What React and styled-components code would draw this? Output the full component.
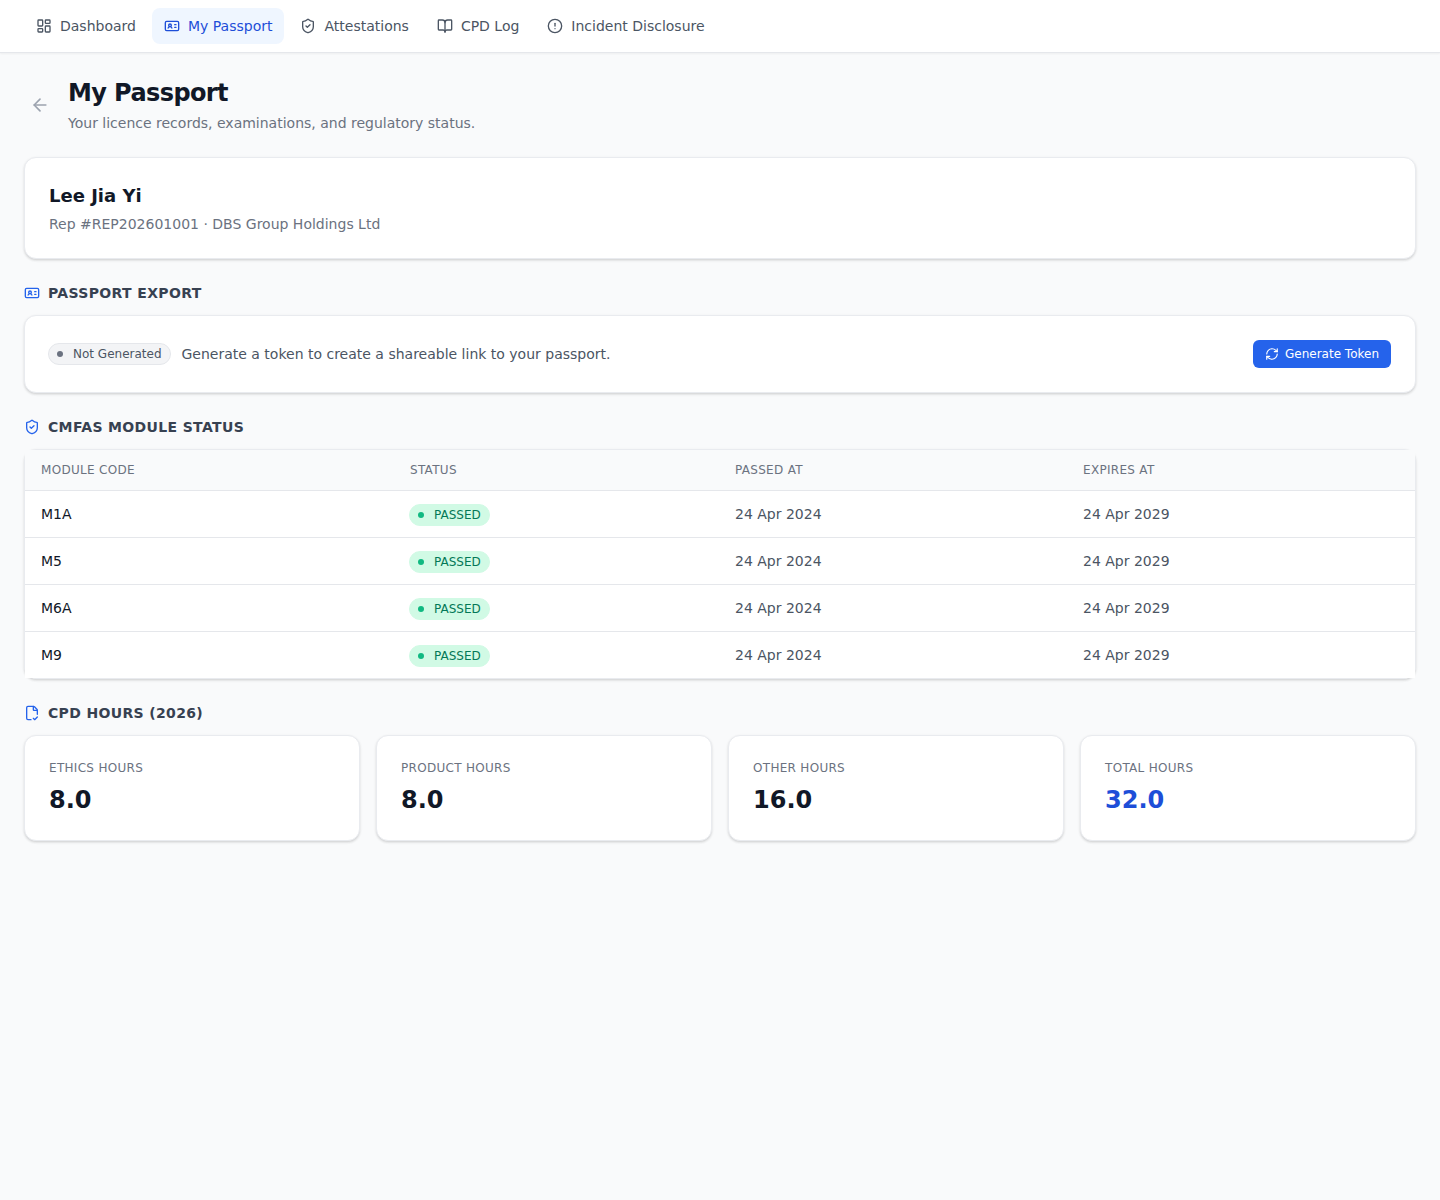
import React from 'react';
import styled, { createGlobalStyle } from 'styled-components';
import {
  LayoutDashboard,
  IdCard,
  ShieldCheck,
  BookOpen,
  CircleAlert,
  ArrowLeft,
  RefreshCw,
  FileCheckCorner,
} from 'lucide-react';

const GlobalStyle = createGlobalStyle`
  * { box-sizing: border-box; }
  body {
    margin: 0;
    background: #f9fafb;
    color: #111827;
    font-family: "DejaVu Sans", sans-serif;
  }
`;

const Page = styled.div`
  min-height: 1200px;
  background: #f9fafb;
`;

const Nav = styled.nav`
  display: flex;
  align-items: center;
  gap: 4px;
  height: 53px;
  padding: 0 24px;
  background: #fff;
  border-bottom: 1px solid #e5e7eb;
  box-shadow: 0 1px 2px rgba(0, 0, 0, 0.05);
`;

const NavItem = styled.a`
  display: flex;
  align-items: center;
  gap: 8px;
  height: 36px;
  padding: 0 12px;
  border-radius: 8px;
  font-size: 14px;
  color: ${p => (p.$active ? '#1d4ed8' : '#4b5563')};
  background: ${p => (p.$active ? '#eff6ff' : 'transparent')};
`;

const Main = styled.main`
  padding: 24px;
`;

const PageHead = styled.header`
  display: flex;
  align-items: center;
  gap: 12px;
  margin-bottom: 24px;
`;

const BackButton = styled.button`
  display: flex;
  align-items: center;
  justify-content: center;
  width: 32px;
  height: 32px;
  padding: 0;
  border: 0;
  background: transparent;
  color: #9ca3af;
`;

const Title = styled.h1`
  margin: 0;
  font-size: 24px;
  line-height: 32px;
  font-weight: 700;
  letter-spacing: -0.6px;
  color: #111827;
`;

const Subtitle = styled.p`
  margin: 4px 0 0;
  font-size: 14px;
  line-height: 20px;
  color: #6b7280;
`;

const Card = styled.section`
  background: #fff;
  border: 1px solid #e9ebef;
  border-radius: 12px;
  box-shadow: 0 1px 3px rgba(0, 0, 0, 0.1), 0 2px 3px -1px rgba(0, 0, 0, 0.1);
`;

const ProfileCard = styled(Card)`
  height: 102px;
  padding: 24px;
`;

const Name = styled.h2`
  margin: 0;
  font-size: 18px;
  line-height: 28px;
  font-weight: 700;
`;

const Meta = styled.p`
  margin: 4px 0 0;
  font-size: 14px;
  line-height: 20px;
  color: #6b7280;
`;

const SectionHead = styled.h3`
  display: flex;
  align-items: center;
  gap: 8px;
  margin: 24px 0 12px;
  height: 20px;
  font-size: 14px;
  font-weight: 700;
  letter-spacing: 0.35px;
  text-transform: uppercase;
  color: #374151;
  svg { color: #2563eb; }
`;

const ExportCard = styled(Card)`
  display: flex;
  align-items: center;
  gap: 11px;
  height: 78px;
  padding: 0 24px 0 23px;
`;

const Badge = styled.span`
  display: inline-flex;
  align-items: center;
  gap: 10px;
  height: 22px;
  padding: 0 8px;
  border-radius: 999px;
  border: 1px solid ${p => (p.$tone === 'green' ? '#d1fae5' : '#e5e7eb')};
  background: ${p => (p.$tone === 'green' ? '#d1fae5' : '#f3f4f6')};
  color: ${p => (p.$tone === 'green' ? '#047857' : '#4b5563')};
  font-size: 12px;
  line-height: 16px;
`;

const Dot = styled.i`
  width: 6px;
  height: 6px;
  border-radius: 50%;
  background: ${p => (p.$tone === 'green' ? '#10b981' : '#6b7280')};
`;

const ExportText = styled.span`
  flex: 1;
  font-size: 14px;
  color: #4b5563;
`;

const Button = styled.button`
  display: flex;
  align-items: center;
  gap: 6px;
  height: 28px;
  padding: 0 12px;
  border: 0;
  border-radius: 6px;
  background: #2563eb;
  color: #fff;
  font-family: inherit;
  font-size: 12px;
`;

const Row = styled.div`
  display: grid;
  grid-template-columns: 369px 325px 348px 1fr;
  align-items: center;
  height: ${p => (p.$head ? '41px' : '47px')};
  background: ${p => (p.$head ? '#f9fafb' : '#fff')};
  border-bottom: 1px solid #e5e7eb;
  &:last-child { border-bottom: 0; height: 46px; }
`;

const HeadCell = styled.div`
  padding: 0 16px;
  font-size: 12px;
  color: #6b7280;
  text-transform: uppercase;
  letter-spacing: 0.3px;
`;

const Cell = styled.div`
  padding: 0 16px;
  font-size: 14px;
  color: ${p => (p.$strong ? '#111827' : '#4b5563')};
`;

const StatusCell = styled(Cell)`
  display: flex;
  padding: 2px 16px 0 15px;
`;

const StatGrid = styled.div`
  display: grid;
  grid-template-columns: repeat(4, 1fr);
  gap: 16px;
`;

const StatCard = styled(Card)`
  height: 106px;
  padding: 24px;
`;

const StatLabel = styled.div`
  font-size: 12px;
  line-height: 16px;
  color: #6b7280;
  letter-spacing: 0.3px;
  text-transform: uppercase;
`;

const StatValue = styled.div`
  margin-top: 8px;
  font-size: 24px;
  line-height: 32px;
  font-weight: 700;
  color: ${p => (p.$accent ? '#1d4ed8' : '#111827')};
`;

const navItems = [
  { label: 'Dashboard', icon: LayoutDashboard },
  { label: 'My Passport', icon: IdCard, active: true },
  { label: 'Attestations', icon: ShieldCheck },
  { label: 'CPD Log', icon: BookOpen },
  { label: 'Incident Disclosure', icon: CircleAlert },
];

const modules = ['M1A', 'M5', 'M6A', 'M9'];

const stats = [
  { label: 'Ethics Hours', value: '8.0' },
  { label: 'Product Hours', value: '8.0' },
  { label: 'Other Hours', value: '16.0' },
  { label: 'Total Hours', value: '32.0', accent: true },
];

export default function App() {
  return (
    <Page>
      <GlobalStyle />
      <Nav>
        {navItems.map(({ label, icon: Icon, active }) => (
          <NavItem key={label} $active={active}>
            <Icon size={16} />
            {label}
          </NavItem>
        ))}
      </Nav>
      <Main>
        <PageHead>
          <BackButton>
            <ArrowLeft size={20} />
          </BackButton>
          <div>
            <Title>My Passport</Title>
            <Subtitle>Your licence records, examinations, and regulatory status.</Subtitle>
          </div>
        </PageHead>

        <ProfileCard>
          <Name>Lee Jia Yi</Name>
          <Meta>Rep #REP202601001 · DBS Group Holdings Ltd</Meta>
        </ProfileCard>

        <SectionHead>
          <IdCard size={16} />
          Passport Export
        </SectionHead>
        <ExportCard>
          <Badge>
            <Dot />
            Not Generated
          </Badge>
          <ExportText>Generate a token to create a shareable link to your passport.</ExportText>
          <Button>
            <RefreshCw size={14} />
            Generate Token
          </Button>
        </ExportCard>

        <SectionHead>
          <ShieldCheck size={16} />
          CMFAS Module Status
        </SectionHead>
        <Card>
          <Row $head>
            <HeadCell>Module Code</HeadCell>
            <HeadCell>Status</HeadCell>
            <HeadCell>Passed At</HeadCell>
            <HeadCell>Expires At</HeadCell>
          </Row>
          {modules.map(code => (
            <Row key={code}>
              <Cell $strong>{code}</Cell>
              <StatusCell>
                <Badge $tone="green">
                  <Dot $tone="green" />
                  PASSED
                </Badge>
              </StatusCell>
              <Cell>24 Apr 2024</Cell>
              <Cell>24 Apr 2029</Cell>
            </Row>
          ))}
        </Card>

        <SectionHead>
          <FileCheckCorner size={16} />
          CPD Hours (2026)
        </SectionHead>
        <StatGrid>
          {stats.map(s => (
            <StatCard key={s.label}>
              <StatLabel>{s.label}</StatLabel>
              <StatValue $accent={s.accent}>{s.value}</StatValue>
            </StatCard>
          ))}
        </StatGrid>
      </Main>
    </Page>
  );
}
